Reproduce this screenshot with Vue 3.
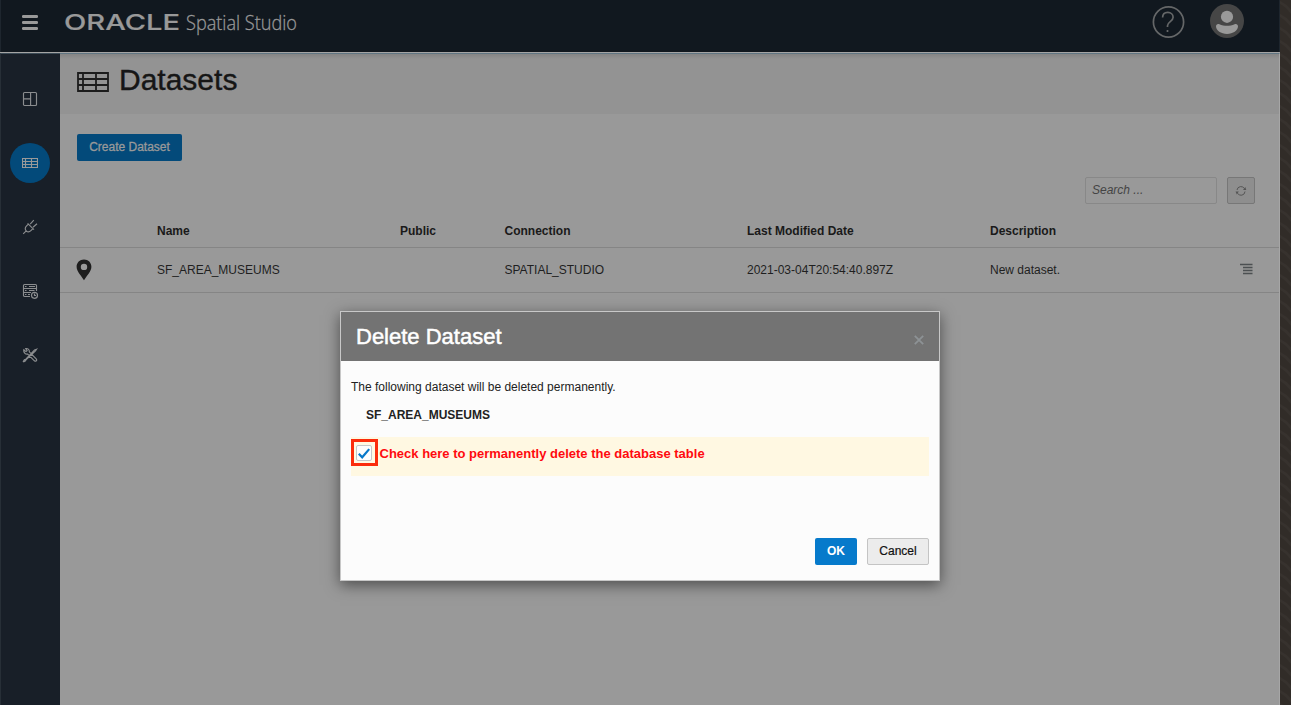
<script setup>
const columns = ['', 'Name', 'Public', 'Connection', 'Last Modified Date', 'Description', '']
</script>

<template>
  <div class="screen">
    <div class="app">
      <header class="topbar">
        <svg class="burger" width="16" height="15" viewBox="0 0 16 15"><path d="M1.2 1.5h13.6M1.2 7.5h13.6M1.2 13.5h13.6" /></svg>
        <svg class="brand" width="250" height="40" viewBox="0 0 250 40">
          <text class="oracle" x="-1" y="22.8" textLength="116" lengthAdjust="spacingAndGlyphs">ORACLE</text>
          <text class="product" x="121" y="23" textLength="111" lengthAdjust="spacingAndGlyphs">Spatial Studio</text>
        </svg>
        <svg class="help" width="34" height="34" viewBox="0 0 34 34">
          <circle cx="17.5" cy="17" r="15.1" />
          <path d="M11.6 12.6c0-3.1 2.1-5.2 5.2-5.2s5.3 2 5.3 4.9c0 4.3-5.6 4.4-5.6 8.5v1.1" />
          <path d="M16.5 25v2" />
        </svg>
        <svg class="avatar" width="34" height="34" viewBox="0 0 34 34">
          <circle cx="17" cy="17" r="17" fill="#464646" />
          <circle cx="17" cy="12.8" r="6.1" />
          <path d="M6 22.3c0-1.9 1.7-2.9 3.4-2.1 4.8 2.2 10.4 2.2 15.2 0 1.7-.8 3.4.2 3.4 2.1 0 4.2-5 7.7-11 7.7s-11-3.5-11-7.7z" />
        </svg>
      </header>

      <div class="body">
        <nav class="sidebar">
          <a class="item"><svg width="16" height="16" viewBox="0 0 16 16"><rect x="1.5" y="1.5" width="13" height="13" rx="1" /><path d="M8.6 1.5v13M1.5 7.8h7.1" /></svg></a>
          <a class="item active"><svg width="16" height="16" viewBox="0 0 16 16"><path d="M.5 3.5h15v9H.5zM.5 6.5h15M.5 9.5h15M3.5 3.5v9M9.5 3.5v9" /></svg></a>
          <a class="item"><svg width="16" height="16" viewBox="0 0 16 16"><path d="M1.2 14.8l3-3M5.6 4.4l6.4 6.3M6.3 5.2L4.4 7.1c-1.5 1.5-1.5 3.4-.2 4.7s3.2 1.3 4.7-.2l2-1.9M8.2 5.2l3.6-4.1M11 8.3l4-3.6" /></svg></a>
          <a class="item"><svg width="16" height="16" viewBox="0 0 16 16"><path d="M8 13.5H2.5a1 1 0 0 1-1-1v-10a1 1 0 0 1 1-1h11a1 1 0 0 1 1 1v5.500M1.500 5.500h13M1.500 9.500h7.500M3 3.500h1.500M7 3.500h6M3 7.500h1.500M7 7.500h5.500M3 11.500h1.500M6 11.500h2" /><circle cx="12.5" cy="12.300" r="3" /><path d="M12.500 10.500v2h1.500" /></svg></a>
          <a class="item"><svg width="16" height="16" viewBox="0 0 16 16"><path d="M14.6 2.2l-2.1.8-8.7 9.2-1.4.6-1.1 1.6.5.4 1.7-1 .7-1.3 9.3-8.6zM1.8 2.8L4 4.6l1.1-.9L3.700 1.600c1.900-.5 3.900.9 3.600 3.200l6.900 7.100c1.200 1.400-.4 3-1.800 1.900L5.700 7C3.400 7.400 1.300 5.400 1.800 2.800z" /></svg></a>
        </nav>

        <main class="content">
          <div class="heading">
            <svg width="32" height="20" viewBox="0 0 32 20"><path d="M1 1h30v18H1zM1 7h30M1 13h30M6 1v18M19 1v18" /></svg>
            <h1>Datasets</h1>
          </div>
          <button class="create">Create Dataset</button>
          <div class="tools">
            <div class="search">Search ...</div>
            <div class="refresh"><svg width="12" height="12" viewBox="0 0 12 12"><path d="M2 5a4 4 0 0 1 7.5-1.3M10 6.5a4 4 0 0 1-7.5 1.7" /><path class="fill" d="M8 5.1h3.3L10.3 2zM.6 6.5h3.2L1.8 9.4z" /></svg></div>
          </div>
          <div class="row head">
            <span v-for="(c, i) in columns" :key="i">{{ c }}</span>
          </div>
          <div class="row data">
            <span><svg class="pin" width="16" height="22" viewBox="0 0 16 22"><path fill-rule="evenodd" d="M8 .5C3.7.5.6 3.7.6 7.8.6 12.3 5.5 17.2 8 21.3c2.5-4.1 7.4-9 7.4-13.5C15.4 3.7 12.3.5 8 .5zm0 4.2a3.2 3.2 0 1 1 0 6.4 3.2 3.2 0 0 1 0-6.4z" /></svg></span>
            <span>SF_AREA_MUSEUMS</span>
            <span></span>
            <span>SPATIAL_STUDIO</span>
            <span>2021-03-04T20:54:40.897Z</span>
            <span>New dataset.</span>
            <span><svg class="menu" width="13" height="12" viewBox="0 0 13 12"><path d="M0 1.5h12.5M3 4.5h9.5M3 7.5h9.5M3 10.5h9.5" /></svg></span>
          </div>
        </main>
      </div>
    </div>
    <svg class="backdrop" width="11" height="705">
      <defs>
        <pattern id="waves" width="11" height="26" patternUnits="userSpaceOnUse"><path d="M-1 2q7 3 13 11M-1 15q7 3 13 11M-1-11q7 3 13 11" /></pattern>
      </defs>
      <rect width="11" height="705" fill="url(#waves)" stroke="none" />
    </svg>

    <section class="dialog">
      <div class="title">
        <h2>Delete Dataset</h2>
        <svg width="10" height="10" viewBox="0 0 10 10"><path d="M.8.8l8.4 8.4M9.2.8L.8 9.2" /></svg>
      </div>
      <div class="dialog-body">
        <p>The following dataset will be deleted permanently.</p>
        <strong>SF_AREA_MUSEUMS</strong>
        <label class="confirm">
          <span class="marker"><span class="box"><svg width="14" height="14" viewBox="0 0 14 14"><path d="M1.8 7.8l3.4 3.5 7-8.2" /></svg></span></span>
          <b>Check here to permanently delete the database table</b>
        </label>
        <div class="actions">
          <button class="ok">OK</button>
          <button class="cancel">Cancel</button>
        </div>
      </div>
    </section>
  </div>
</template>

<style>
body { margin: 0; overflow: hidden; }
</style>

<style scoped>
* { box-sizing: border-box; }
.screen { position: relative; display: flex; width: 1291px; height: 705px; overflow: hidden; font: 12px/16px "Liberation Sans", Arial, sans-serif; color: #1f1f1f; background: #312c28; }
.app { width: 1280px; height: 705px; display: flex; flex-direction: column; }
.backdrop { flex: none; fill: none; stroke: #37322e; stroke-width: 2.5; }
.topbar { display: flex; flex: none; height: 52px; background: #11181f; border-left: 1px solid #1e262e; border-right: 1px solid #1e262e; }
svg { display: block; flex: none; }
.burger { margin: 15px 0 0 21px; fill: none; stroke: #999; stroke-width: 2.8; stroke-linecap: round; }
.brand { margin: 7px 0 0 27px; fill: #999; overflow: visible; }
.oracle { font: 500 21.5px Inter, sans-serif; stroke: #999; stroke-width: .2; }
.product { font: 300 20px "Open Sans", "Noto Sans", sans-serif; stroke: #999; stroke-width: .3; }
.help { margin: 5px 0 0 auto; fill: none; stroke: #656768; stroke-width: 1.7; }
.avatar { margin: 4px 35px 0 25px; fill: #999; }
.body { display: flex; flex: 1; border-top: 1px solid #a5a5a5; }
.sidebar { width: 60px; padding: 25px 1px 0 0; display: flex; flex-direction: column; align-items: center; gap: 24px; background: #181f28; border-left: 1px solid #272f37; border-top: 1px solid #3b4a55; }
.item { width: 40px; height: 40px; display: flex; align-items: center; justify-content: center; border-radius: 50%; fill: none; stroke: #8b8d8f; stroke-width: 1.15; }
.item.active { background: #034a7a; stroke: #999; }
.content { flex: 1; background: #999; border-top: 1px solid #607582; border-right: 1px solid #a6a6a6; }
.heading { height: 60px; display: flex; padding: 18px 0 0 17px; background: linear-gradient(#858585, #939393 5px); fill: none; stroke: #1c1c1c; stroke-width: 1.8; }
.heading h1 { margin: -10px 0 0 10px; font-size: 30px; line-height: 36px; font-weight: 400; color: #161616; -webkit-text-stroke: .4px #161616; }
button { font: 12px/16px "Liberation Sans", Arial, sans-serif; padding: 0 0 2px; border: 0; border-radius: 2px; height: 27px; display: block; }
.create { margin: 20px 0 0 17px; width: 105px; background: #034a7a; color: #999; -webkit-text-stroke: .3px #999; }
.tools { display: flex; justify-content: flex-end; gap: 10px; margin: 16px 24px 0 0; }
.search { width: 132px; height: 27px; padding: 4px 6px; border: 1px solid #888; border-radius: 2px; font-style: italic; color: #444; }
.refresh { width: 28px; height: 27px; display: grid; place-items: center; border: 1px solid #777; border-radius: 2px; background: #8e8e8e; fill: none; stroke: #555; }
.refresh .fill { fill: #555; stroke: none; }
.row { display: grid; grid-template-columns: 80px 243px 104.5px 242.5px 243px 250px 1fr; padding-left: 17px; align-items: center; border-bottom: 1px solid #858585; }
.head { height: 44px; padding-top: 10px; font-weight: 700; color: #1a1a1a; }
.data { height: 45px; }
.pin { fill: #1d1d1d; margin: -1px 0 0 -1px; }
.menu { fill: none; stroke: #4c5052; stroke-width: 1.4; margin-top: -2px; }
.dialog { position: absolute; left: 340px; top: 311px; width: 600px; height: 270px; border: 1px solid #c8c8c8; background: #fcfcfc; box-shadow: 0 4px 14px rgba(0,0,0,.5); color: #222; }
.title { height: 49px; display: flex; justify-content: space-between; background: #737373; padding: 11px 15px 0; }
.title h2 { margin: 0; font-size: 22px; line-height: 28px; font-weight: 400; color: #fff; -webkit-text-stroke: .5px #fff; }
.title svg { margin-top: 12px; fill: none; stroke: #8d9295; stroke-width: 1.8; }
.dialog-body { padding: 18px 10px 0; }
.dialog-body p { margin: 0; }
.dialog-body strong { display: block; margin: 12px 0 0 15px; }
.confirm { display: flex; height: 39px; margin-top: 14px; padding-top: 2px; background: #fff8e2; color: #ff0a0f; }
.confirm b { font-size: 13px; line-height: 30px; margin-left: 2px; }
.marker { width: 27px; height: 27px; margin-right: -.5px; display: grid; place-items: center; border: 3px solid #fb2c0b; }
.box { width: 16px; height: 16px; margin-left: -1px; border: 1px solid #c3c7ca; border-radius: 2px; background: #fcfdfe; display: grid; place-items: center; fill: none; stroke: #0678ca; stroke-width: 2.2; }
.actions { display: flex; justify-content: flex-end; gap: 10px; margin-top: 62px; }
.ok { width: 42px; background: #067acb; color: #fff; font-weight: 700; }
.cancel { width: 62px; background: #ececec; border: 1px solid #c4c4c4; color: #111; -webkit-text-stroke: .2px #111; }
</style>
